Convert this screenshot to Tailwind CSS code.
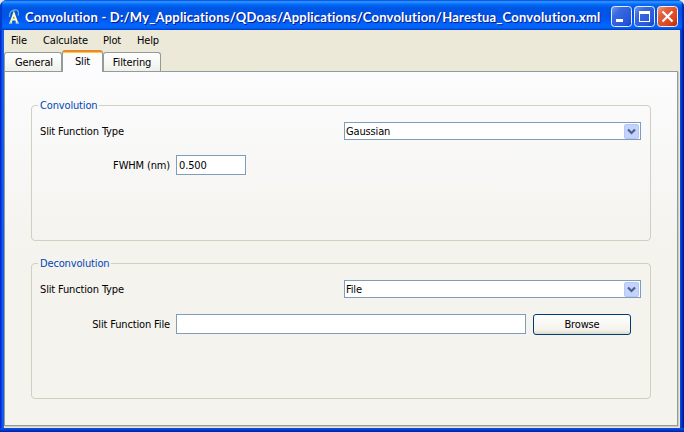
<!DOCTYPE html>
<html lang="en">
<head>
<meta charset="utf-8">
<title>Convolution</title>
<script src="https://cdn.jsdelivr.net/npm/@tailwindcss/browser@4"></script>
</head>
<body class="h-[432px] w-[684px] overflow-hidden bg-[#ece9d8] font-['DejaVu_Sans_Condensed','DejaVu_Sans',sans-serif] text-[11px] leading-[14px] tracking-[-0.15px] text-black">
<div class="flex h-[432px] w-[684px] flex-col overflow-hidden rounded-t-[7px] bg-[linear-gradient(90deg,#0019cf_0,#0831d9_1px,#166aee_3px,#0855dd_4px,#0855dd_680px,#0540d8_681px,#001ea0_683px,#00138c_684px)]">
  <header class="flex h-[30px] shrink-0 items-center bg-[linear-gradient(180deg,#0058ee_0,#3593ff_6%,#288eff_8%,#127dff_11%,#036ffc_14%,#0262ee_20%,#0057e5_26%,#0054e3_45%,#0055eb_55%,#005bf5_68%,#0066ff_85%,#0062ef_93%,#003dd7_100%)] pr-[6px] pl-[7px] shadow-[inset_2px_0_1px_#0038c8,inset_-2px_0_1px_#0028b0]">
    <svg class="mt-[3px] h-4 w-4 shrink-0" viewBox="0 0 16 16" fill="none">
      <path d="M2.500 8C2 3.500 5 .8 8.500 .8C11 .8 12 3 11.300 6.500" stroke="#6fb0e0" stroke-width="1.200"/>
      <path d="M3.700 13.500L6.900 4.500L10.100 13.500M4.800 10.500H9" stroke="#fffbb0" stroke-width="2"/>
      <path d="M2 14H5.200M8.600 14H12" stroke="#fffbb0" stroke-width="1.200"/>
    </svg>
    <h1 class="ml-[2px] mt-[3px] w-[582px] whitespace-nowrap font-['Lato','Open_Sans',sans-serif] text-[13px] leading-4 font-bold tracking-[0.21px] text-white [text-shadow:1px_1px_0_#0a1883]">Convolution - D:/My_Applications/QDoas/Applications/Convolution/Harestua_Convolution.xml</h1>
    <div class="ml-auto mt-[3px] flex gap-[2px]">
      <svg class="h-[21px] w-[21px]" viewBox="0 0 21 21"><rect x=".5" y=".5" width="20" height="20" rx="3" fill="url(#blue)" stroke="#e4ecff"/><path d="M5 13h7v3H5z" fill="#fff"/>
        <defs><linearGradient id="blue" x1="0" y1="0" x2="1" y2="1"><stop offset="0" stop-color="#789be8"/><stop offset=".3" stop-color="#3a68df"/><stop offset=".75" stop-color="#2757dc"/><stop offset="1" stop-color="#1941b8"/></linearGradient>
        <linearGradient id="red" x1="0" y1="0" x2="1" y2="1"><stop offset="0" stop-color="#f0a187"/><stop offset=".3" stop-color="#e1603c"/><stop offset=".7" stop-color="#dc4620"/><stop offset="1" stop-color="#a92e0c"/></linearGradient></defs></svg>
      <svg class="h-[21px] w-[21px]" viewBox="0 0 21 21"><rect x=".5" y=".5" width="20" height="20" rx="3" fill="url(#blue)" stroke="#e4ecff"/><path d="M5 5h11v11H5zM6 8v7h9V8z" fill="#fff" fill-rule="evenodd"/></svg>
      <svg class="h-[21px] w-[21px]" viewBox="0 0 21 21"><rect x=".5" y=".5" width="20" height="20" rx="3" fill="url(#red)" stroke="#ffe9e2"/><path d="M5.500 5.500l10 10M15.500 5.500l-10 10" stroke="#fff" stroke-width="2.200"/></svg>
    </div>
  </header>
  <div class="mx-[4px] flex h-[398px] shrink-0 flex-col bg-[#ece9d8]">
    <nav class="flex h-5 items-start pt-1">
      <span class="ml-[7px] w-8">File</span><span class="w-[60px]">Calculate</span><span class="w-[34px]">Plot</span><span>Help</span>
    </nav>
    <div class="relative z-10 -mb-px flex h-[22px] items-end">
      <div class="mb-px flex h-[19px] w-[58px] justify-center rounded-t-[3px] border border-b-0 border-[#919b9c] bg-linear-to-b from-white to-[#f0f0ea] pt-[3px] pl-[2px]">General</div>
      <div class="h-[22px] w-[41px] rounded-t-[3px] border-x border-t-2 border-x-[#919b9c] border-t-[#e68b2c] bg-[#fcfcfe] text-center shadow-[inset_0_1px_0_#ffc73c]"><span class="block pt-[3px]">Slit</span></div>
      <div class="mb-px flex h-[19px] w-[58px] justify-center rounded-t-[3px] border border-b-0 border-[#919b9c] bg-linear-to-b from-white to-[#f0f0ea] pt-[3px]">Filtering</div>
    </div>
    <main class="mr-[2px] flex h-[355px] flex-col gap-[22px] border border-[#919b9c] bg-[linear-gradient(180deg,#fcfcfe_0,#f4f3ee_50%,#f4f3ee_100%)] pt-[33px] pr-[26px] pl-[26px] shadow-[1px_1px_0_#d0cdbf]">
      <section class="relative h-[136px] rounded-[4px] border border-[#d0d0bf] px-2 pt-[16px]">
        <h2 class="absolute -top-[7px] left-[6px] bg-[#fafafa] px-[2px] leading-[13px] text-[#0046b5]">Convolution</h2>
        <div class="flex h-[19px] items-start">
          <span class="w-[304px] pt-[3px]">Slit Function Type</span>
          <div class="flex h-[18px] w-[297px] items-center justify-between border border-[#7f9db9] bg-white pr-px pl-px"><span class="pt-px">Gaussian</span>
            <svg class="h-[15px] w-[15px]" viewBox="0 0 15 15"><rect x=".5" y=".5" width="14" height="14" rx="1.500" fill="#c3d3fd" stroke="#b5c7f3"/><path d="M4 5.500L7.500 9L11 5.500" fill="none" stroke="#4d6185" stroke-width="2.200"/></svg>
          </div>
        </div>
        <div class="mt-[14px] flex h-5 items-center">
          <span class="w-[130px] pt-px text-right">FWHM (nm)</span>
          <div class="ml-[6px] h-5 w-[70px] border border-[#7f9db9] bg-white px-[2px] pt-[3px]">0.500</div>
        </div>
      </section>
      <section class="relative h-[136px] rounded-[4px] border border-[#d0d0bf] px-2 pt-[16px]">
        <h2 class="absolute -top-[7px] left-[6px] bg-[#f4f3ee] px-[2px] leading-[13px] text-[#0046b5]">Deconvolution</h2>
        <div class="flex h-[19px] items-start">
          <span class="w-[304px] pt-[3px]">Slit Function Type</span>
          <div class="flex h-[18px] w-[297px] items-center justify-between border border-[#7f9db9] bg-white pr-px pl-px"><span class="pt-px">File</span>
            <svg class="h-[15px] w-[15px]" viewBox="0 0 15 15"><rect x=".5" y=".5" width="14" height="14" rx="1.500" fill="#c3d3fd" stroke="#b5c7f3"/><path d="M4 5.500L7.500 9L11 5.500" fill="none" stroke="#4d6185" stroke-width="2.200"/></svg>
          </div>
        </div>
        <div class="mt-[15px] flex h-[21px] items-center">
          <span class="w-[130px] text-right">Slit Function File</span>
          <div class="ml-[6px] h-5 w-[350px] self-start border border-[#7f9db9] bg-white"></div>
          <div class="ml-[7px] flex h-[21px] w-[98px] items-center justify-center rounded-[3px] border border-[#003c74] bg-[linear-gradient(180deg,#fff_0,#f3f2ec_80%,#dcd8cc_100%)] pt-px">Browse</div>
        </div>
      </section>
    </main>
  </div>
  <div class="h-1 shrink-0 bg-[linear-gradient(180deg,#0855dd_0,#0540d8_40%,#001ea0_100%)]"></div>
</div>
</body>
</html>
